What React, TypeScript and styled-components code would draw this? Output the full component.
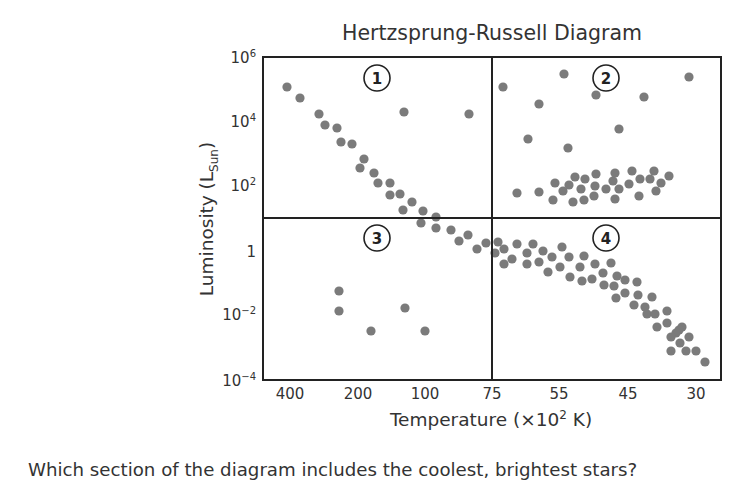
import React from "react";
import styled, { createGlobalStyle } from "styled-components";

const GlobalStyle = createGlobalStyle`
  html, body {
    margin: 0;
    padding: 0;
    background: #fff;
  }
  body {
    font-family: "DejaVu Sans", Verdana, sans-serif;
    color: #333;
  }
`;

type Point = [number, number];

// star positions, in page pixels of the chart
const STARS: Point[] = [
  // main sequence, hot end
  [287, 87], [300, 98], [319, 114], [325, 125], [337, 128], [341, 142],
  [352, 144], [364, 159], [360, 168], [374, 173], [378, 183], [390, 183],
  [390, 195], [400, 194], [412, 202], [403, 210], [423, 211], [436, 217],
  [421, 223], [436, 228], [451, 230], [468, 235], [459, 241], [477, 249],
  [486, 243], [495, 253],
  // supergiants of section 1
  [404, 112], [469, 114],
  // white dwarfs
  [339, 291], [339, 311], [405, 308], [371, 331], [425, 331],
  // giants and supergiants of section 2
  [503, 87], [564, 74], [539, 104], [596, 95], [644, 97], [689, 77],
  [619, 129], [528, 139], [568, 148],
  [517, 193], [539, 192], [553, 200], [555, 183], [563, 191], [569, 185],
  [575, 177], [573, 202], [581, 189], [584, 200], [585, 179], [594, 196],
  [595, 186], [596, 174], [606, 189], [613, 181], [615, 173], [615, 199],
  [619, 189], [629, 184], [632, 171], [639, 196], [640, 179], [650, 179],
  [654, 171], [656, 191], [661, 183], [669, 176],
  // main sequence, cool end
  [498, 242], [504, 249], [504, 264], [512, 259], [517, 244], [527, 253],
  [527, 264], [533, 244], [539, 262], [543, 251], [548, 272], [552, 257],
  [560, 267], [562, 247], [569, 257], [570, 277], [580, 267], [582, 281],
  [584, 256], [592, 279], [595, 264], [603, 273], [604, 285], [611, 263],
  [614, 286], [617, 276], [616, 298], [625, 280], [625, 293], [637, 282],
  [638, 295], [634, 305], [652, 297], [645, 307], [647, 314], [655, 314],
  [667, 311], [657, 327], [667, 323], [682, 327], [679, 330], [676, 333],
  [671, 337], [689, 337], [680, 343], [671, 351], [686, 351], [696, 351],
  [705, 362],
];

const Y_TICKS: { label: string; exp?: string; y: number }[] = [
  { label: "10", exp: "6", y: 63 },
  { label: "10", exp: "4", y: 127 },
  { label: "10", exp: "2", y: 191 },
  { label: "1", y: 257 },
  { label: "10", exp: "\u22122", y: 320 },
  { label: "10", exp: "\u22124", y: 386 },
];

const X_TICKS: { label: string; x: number }[] = [
  { label: "400", x: 290 },
  { label: "200", x: 358 },
  { label: "100", x: 425 },
  { label: "75", x: 492 },
  { label: "55", x: 559 },
  { label: "45", x: 628 },
  { label: "30", x: 696 },
];

const SECTIONS: { n: number; x: number; y: number }[] = [
  { n: 1, x: 377, y: 78 },
  { n: 2, x: 606, y: 78 },
  { n: 3, x: 377, y: 238 },
  { n: 4, x: 606, y: 238 },
];

const PLOT = { left: 263, right: 721, top: 57, bottom: 380, midX: 492, midY: 218 };

const App = () => {
  return (
    <>
      <GlobalStyle />
      <Page>
        <Chart viewBox="0 0 732 440" width={732} height={440}>
          <ChartTitle x={492} y={40} textAnchor="middle">
            Hertzsprung-Russell Diagram
          </ChartTitle>

          {STARS.map(([x, y], i) => (
            <Star key={i} cx={x} cy={y} r={4.6} />
          ))}

          <Frame
            x={PLOT.left}
            y={PLOT.top}
            width={PLOT.right - PLOT.left}
            height={PLOT.bottom - PLOT.top}
          />
          <Divider x1={PLOT.midX} y1={PLOT.top} x2={PLOT.midX} y2={PLOT.bottom} />
          <Divider x1={PLOT.left} y1={PLOT.midY} x2={PLOT.right} y2={PLOT.midY} />

          {SECTIONS.map((s) => (
            <g key={s.n}>
              <SectionRing cx={s.x} cy={s.y} r={13} />
              <SectionNumber x={s.x} y={s.y + 5.5} textAnchor="middle">
                {s.n}
              </SectionNumber>
            </g>
          ))}

          {Y_TICKS.map((t) => (
            <TickLabel key={t.y} x={256} y={t.y} textAnchor="end">
              {t.label}
              {t.exp && (
                <tspan dy={-6} fontSize={10}>
                  {t.exp}
                </tspan>
              )}
            </TickLabel>
          ))}

          {X_TICKS.map((t) => (
            <TickLabel key={t.label} x={t.x} y={399} textAnchor="middle">
              {t.label}
            </TickLabel>
          ))}

          <AxisTitle x={491} y={426} textAnchor="middle">
            Temperature ({"\u00d7"}10
            <tspan dy={-7} fontSize={12}>
              2
            </tspan>
            <tspan dy={7}> K)</tspan>
          </AxisTitle>

          <AxisTitle
            transform="translate(213 219) rotate(-90)"
            textAnchor="middle"
          >
            Luminosity (L
            <tspan dy={5} fontSize={12}>
              Sun
            </tspan>
            <tspan dy={-5}>)</tspan>
          </AxisTitle>
        </Chart>
        <Question>
          Which section of the diagram includes the coolest, brightest stars?
        </Question>
      </Page>
    </>
  );
};

export default App;

const Page = styled.div`
  width: 732px;
  height: 492px;
  display: flex;
  flex-direction: column;
  background: #fff;
`;

const Chart = styled.svg`
  display: block;
  flex: none;
`;

const ChartTitle = styled.text`
  font-family: "DejaVu Sans", Verdana, sans-serif;
  font-size: 20.5px;
  fill: #333;
`;

const TickLabel = styled.text`
  font-family: "DejaVu Sans", Verdana, sans-serif;
  font-size: 15px;
  fill: #333;
`;

const AxisTitle = styled.text`
  font-family: "DejaVu Sans", Verdana, sans-serif;
  font-size: 18.5px;
  fill: #333;
`;

const Star = styled.circle`
  fill: #7b7b7b;
`;

const Frame = styled.rect`
  fill: none;
  stroke: #222;
  stroke-width: 2;
`;

const Divider = styled.line`
  stroke: #222;
  stroke-width: 2;
`;

const SectionRing = styled.circle`
  fill: #fff;
  stroke: #222;
  stroke-width: 1.6;
`;

const SectionNumber = styled.text`
  font-family: "DejaVu Sans", Verdana, sans-serif;
  font-size: 15px;
  font-weight: bold;
  fill: #222;
`;

const Question = styled.p`
  margin: 19px 0 0;
  padding-left: 28px;
  font-family: "DejaVu Sans", Verdana, sans-serif;
  font-size: 18.2px;
  line-height: 21px;
  color: #333;
`;
